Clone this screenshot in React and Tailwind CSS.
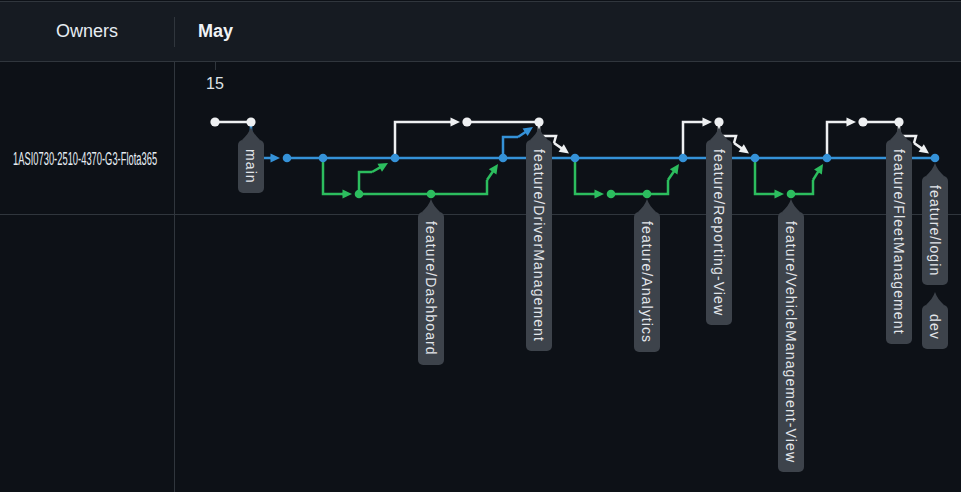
import React from "react";

const BLUE = "#3592d8";
const GREEN = "#2cbd5e";
const WHITE = "#eef0f2";
const OX = 175;
const OY = 62;

function Arrow({ from, tip, color }) {
  const dx = tip[0] - from[0];
  const dy = tip[1] - from[1];
  const len = Math.hypot(dx, dy);
  const ux = dx / len;
  const uy = dy / len;
  const L = 9.5;
  const H = 4.6;
  const bx = tip[0] - ux * L;
  const by = tip[1] - uy * L;
  const p1 = [bx - uy * H, by + ux * H];
  const p2 = [bx + uy * H, by - ux * H];
  return (
    <g>
      <line x1={from[0]} y1={from[1]} x2={bx + ux} y2={by + uy} stroke={color} strokeWidth="2.5" />
      <polygon points={`${tip[0]},${tip[1]} ${p1[0]},${p1[1]} ${p2[0]},${p2[1]}`} fill={color} />
    </g>
  );
}

function P({ d, color }) {
  return <path d={d} stroke={color} strokeWidth="2.5" fill="none" strokeLinejoin="miter" />;
}

function Lightning({ x }) {
  return (
    <g>
      <P d={`M${x} 122 V136 H${x + 17} L${x + 15} 143`} color={WHITE} />
      <Arrow from={[x + 15, 143]} tip={[x + 30, 153.5]} color={WHITE} />
    </g>
  );
}

function Label({ x, y, texts }) {
  return (
    <div
      className="absolute flex flex-col items-center gap-[7px]"
      style={{ left: x - OX - 13, top: y - OY + 5 }}
    >
      {texts.map((t) => (
        <div key={t} className="flex flex-col items-center">
          <svg width="26" height="13" viewBox="0 0 26 13" className="block">
            <path d="M13 0 C14.5 5 18 9 22 13 L4 13 C8 9 11.5 5 13 0 Z" fill="#3d434b" />
          </svg>
          <div className="w-[26px] rounded-[5px] bg-[#3d434b] py-[9px] flex justify-center">
            <span className="[writing-mode:vertical-rl] text-[14px] leading-[26px] tracking-[1.1px] text-[#e3e6ea] font-['Liberation_Sans',Arial,sans-serif]">
              {t}
            </span>
          </div>
        </div>
      ))}
    </div>
  );
}

const labels = [
  { x: 251, y: 122, t: ["main"] },
  { x: 431, y: 194, t: ["feature/Dashboard"] },
  { x: 539, y: 122, t: ["feature/DriverManagement"] },
  { x: 647, y: 194, t: ["feature/Analytics"] },
  { x: 719, y: 122, t: ["feature/Reporting-View"] },
  { x: 791, y: 194, t: ["feature/VehicleManagement-View"] },
  { x: 899, y: 122, t: ["feature/FleetManagement"] },
  { x: 935, y: 158, t: ["feature/login", "dev"] },
];

const blueNodes = [287, 323, 395, 503, 575, 683, 755, 827, 935];
const whiteNodes = [215, 251, 467, 539, 719, 863, 899];
const greenNodes = [359, 431, 611, 647, 791];

export default function App() {
  return (
    <div className="w-[961px] h-[492px] overflow-hidden bg-[#0d1117] pt-px flex flex-col font-['Liberation_Sans',Arial,sans-serif]">
      <div className="h-[61px] shrink-0 bg-[#161b22] border-t border-b border-[#30363d] flex items-center">
        <div className="w-[174px] text-center text-[18px] text-[#e6edf3]">Owners</div>
        <div className="w-px h-[30px] bg-[#30363d]" />
        <div className="pl-[23px] text-[18px] font-bold text-[#f0f3f6]">May</div>
      </div>
      <div className="flex-1 flex min-h-0">
        <div className="w-[175px] shrink-0 border-r border-[#30363d] flex flex-col">
          <div className="h-[153px] border-b border-[#30363d] pt-[88px] pl-[13px]">
            <div className="origin-left scale-x-[0.52] whitespace-nowrap text-[18px] leading-[18px] text-[#e6edf3]">
              1ASI0730-2510-4370-G3-Flota365
            </div>
          </div>
        </div>
        <div className="relative flex-1">
          <svg width="786" height="430" viewBox="175 62 786 430" className="block">
            <line x1="175" y1="214.5" x2="961" y2="214.5" stroke="#30363d" strokeWidth="1" />
            <line x1="215.5" y1="62" x2="215.5" y2="70" stroke="#30363d" strokeWidth="1" />
            <text x="215" y="88.5" textAnchor="middle" fontSize="16" fill="#dde2e7" fontFamily="Liberation Sans, Arial, sans-serif">15</text>

            <P d="M215 122 H251" color={WHITE} />
            <P d="M395 158 V122 H452" color={WHITE} />
            <Arrow from={[450, 122]} tip={[460, 122]} color={WHITE} />
            <P d="M467 122 H539" color={WHITE} />
            <Lightning x={539} />
            <P d="M683 158 V122 H704" color={WHITE} />
            <Arrow from={[702, 122]} tip={[712, 122]} color={WHITE} />
            <Lightning x={719} />
            <P d="M827 158 V122 H848" color={WHITE} />
            <Arrow from={[846, 122]} tip={[856, 122]} color={WHITE} />
            <P d="M863 122 H899" color={WHITE} />
            <Lightning x={899} />

            <P d="M251 122 V158 H272" color={BLUE} />
            <Arrow from={[270, 158]} tip={[280, 158]} color={BLUE} />
            <P d="M287 158 H935" color={BLUE} />
            <P d="M503 158 V137 H518" color={BLUE} />
            <Arrow from={[518, 137]} tip={[533, 127]} color={BLUE} />

            <P d="M323 158 V194 H344" color={GREEN} />
            <Arrow from={[342, 194]} tip={[352, 194]} color={GREEN} />
            <P d="M359 194 V172 H372" color={GREEN} />
            <Arrow from={[372, 172]} tip={[388, 163]} color={GREEN} />
            <P d="M359 194 H487 V180" color={GREEN} />
            <Arrow from={[487, 180]} tip={[498, 164]} color={GREEN} />
            <P d="M575 158 V194 H596" color={GREEN} />
            <Arrow from={[594, 194]} tip={[604, 194]} color={GREEN} />
            <P d="M611 194 H668 V180" color={GREEN} />
            <Arrow from={[668, 180]} tip={[679, 164]} color={GREEN} />
            <P d="M755 158 V194 H776" color={GREEN} />
            <Arrow from={[774, 194]} tip={[784, 194]} color={GREEN} />
            <P d="M791 194 H813 V180" color={GREEN} />
            <Arrow from={[813, 180]} tip={[823, 164]} color={GREEN} />

            {blueNodes.map((x) => (
              <circle key={"b" + x} cx={x} cy={158} r="4.3" fill={BLUE} />
            ))}
            {greenNodes.map((x) => (
              <circle key={"g" + x} cx={x} cy={194} r="4.3" fill={GREEN} />
            ))}
            {whiteNodes.map((x) => (
              <circle key={"w" + x} cx={x} cy={122} r="4.6" fill={WHITE} />
            ))}
          </svg>
          {labels.map((l) => (
            <Label key={l.x} x={l.x} y={l.y} texts={l.t} />
          ))}
        </div>
      </div>
    </div>
  );
}
